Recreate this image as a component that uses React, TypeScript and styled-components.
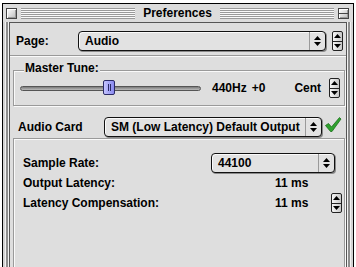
import React from 'react';
import styled, { createGlobalStyle } from 'styled-components';

const GlobalStyle = createGlobalStyle`
  html, body {
    margin: 0;
    padding: 0;
    background: #fff;
    overflow: hidden;
  }
  body {
    font-family: "Liberation Sans", Arial, sans-serif;
    font-size: 12px;
    font-weight: bold;
    color: #000;
  }
`;

const Window = styled.div`
  box-sizing: border-box;
  margin: 3px 0 0 2px;
  width: 352px;
  height: 264px;
  border: 1px solid #000;
  border-bottom: none;
  background: #d2d2d2;
  display: flex;
  flex-direction: column;
  padding: 0 6px;
`;

const TitleBar = styled.div`
  height: 18px;
  margin: 0 -6px;
  display: flex;
  align-items: center;
  gap: 4px;
  padding: 0 4px 0 3px;
  background: #dcdcdc;
`;

const CloseBox = styled.div`
  box-sizing: border-box;
  width: 11px;
  height: 11px;
  border: 1px solid #444;
  background: linear-gradient(135deg, #ffffff 0%, #bbbbbb 100%);
  box-shadow: inset 1px 1px 0 #fff, inset -1px -1px 0 #999;
`;

const ShadeBox = styled(CloseBox)`
  display: flex;
  align-items: center;
  &::after {
    content: '';
    display: block;
    width: 100%;
    height: 1px;
    background: #444;
  }
`;

const Stripes = styled.div`
  flex: 1;
  height: 11px;
  background: repeating-linear-gradient(to bottom, #9a9a9a 0 1px, #fafafa 1px 2px);
`;

const Title = styled.div`
  padding: 0 4px;
  line-height: 16px;
`;

const Content = styled.div`
  flex: 1;
  display: flex;
  flex-direction: column;
  border: 1px solid #555;
  border-bottom: none;
  background: #dedede;
  box-shadow: -1px 0 0 #f2f2f2, -3px 0 0 #8e8e8e, -4px 0 0 #f2f2f2,
    1px 0 0 #f2f2f2, 3px 0 0 #8e8e8e, 4px 0 0 #f2f2f2;
`;

const Row = styled.div<{ $top: number; $left: number; $height: number }>`
  display: flex;
  align-items: center;
  margin-top: ${({ $top }) => $top}px;
  padding-left: ${({ $left }) => $left}px;
  height: ${({ $height }) => $height}px;
`;

const Label = styled.div<{ $width: number }>`
  width: ${({ $width }) => $width}px;
  flex-shrink: 0;
  white-space: nowrap;
`;

const Divider = styled.div`
  margin-top: 4px;
  height: 1px;
  background: #999;
  border-bottom: 1px solid #fafafa;
`;

const GroupBox = styled.div<{ $top: number; $grow?: boolean }>`
  position: relative;
  margin: ${({ $top }) => $top}px 1px 0 3px;
  border: 1px solid #9a9a9a;
  box-shadow: inset 1px 1px 0 #fafafa, 1px 1px 0 #fafafa;
  ${({ $grow }) => ($grow ? 'flex: 1; border-bottom: none;' : '')}
`;

const Legend = styled.div`
  position: absolute;
  left: 10px;
  top: -10px;
  padding: 0 1px;
  background: #dedede;
  line-height: 14px;
`;

const PopupBox = styled.div<{ $width: number }>`
  box-sizing: border-box;
  width: ${({ $width }) => $width}px;
  height: 20px;
  border: 1px solid #111;
  border-radius: 4px;
  background: #e2e2e2;
  box-shadow: 1px 1px 0 #8a8a8a, inset 1px 1px 0 #fafafa;
  display: flex;
  align-items: center;
  flex-shrink: 0;
`;

const PopupText = styled.div`
  flex: 1;
  padding-left: 6px;
  white-space: nowrap;
  overflow: hidden;
`;

const PopupArrow = styled.div`
  width: 15px;
  height: 100%;
  border-left: 1px solid #9a9a9a;
  display: flex;
  align-items: center;
  justify-content: center;
`;

const StepperBox = styled.div<{ $left: number }>`
  box-sizing: border-box;
  margin-left: ${({ $left }) => $left}px;
  width: 11px;
  height: 20px;
  border: 1px solid #222;
  border-radius: 2px;
  background: linear-gradient(to right, #f6f6f6, #c8c8c8);
  display: flex;
  flex-direction: column;
  flex-shrink: 0;
`;

const StepperHalf = styled.div<{ $bottom?: boolean }>`
  flex: 1;
  display: flex;
  align-items: center;
  justify-content: center;
  ${({ $bottom }) => ($bottom ? 'border-top: 1px solid #222;' : '')}
`;

const SliderTrack = styled.div`
  position: relative;
  box-sizing: border-box;
  width: 181px;
  height: 5px;
  border: 1px solid #555;
  border-radius: 3px;
  background: linear-gradient(to bottom, #7a7a7a, #bbbbbb);
  flex-shrink: 0;
`;

const SliderThumb = styled.div`
  position: absolute;
  left: 82px;
  top: -7px;
  box-sizing: border-box;
  width: 12px;
  height: 15px;
  border: 1px solid #2a2a66;
  border-radius: 2px;
  background: linear-gradient(to right, #c4c4ff, #8888ee);
  display: flex;
  justify-content: center;
  align-items: center;
  gap: 1px;
`;

const Grip = styled.div`
  width: 1px;
  height: 7px;
  background: #2a2a66;
`;

const Value = styled.div<{ $left: number }>`
  margin-left: ${({ $left }) => $left}px;
  white-space: nowrap;
`;

const Arrows = () => (
  <svg width="7" height="10" viewBox="0 0 7 10">
    <path d="M3.5 0 L7 4 L0 4 Z M3.5 10 L7 6 L0 6 Z" fill="#000" />
  </svg>
);

const Stepper = ({ left }: { left: number }) => (
  <StepperBox $left={left}>
    <StepperHalf>
      <svg width="7" height="4" viewBox="0 0 7 4">
        <path d="M3.5 0 L7 4 L0 4 Z" fill="#000" />
      </svg>
    </StepperHalf>
    <StepperHalf $bottom>
      <svg width="7" height="4" viewBox="0 0 7 4">
        <path d="M0 0 L7 0 L3.5 4 Z" fill="#000" />
      </svg>
    </StepperHalf>
  </StepperBox>
);

const Popup = ({ width, text }: { width: number; text: string }) => (
  <PopupBox $width={width}>
    <PopupText>{text}</PopupText>
    <PopupArrow>
      <Arrows />
    </PopupArrow>
  </PopupBox>
);

const CheckMark = () => (
  <svg width="18" height="18" viewBox="0 0 18 18" style={{ marginLeft: 2, marginTop: -4 }}>
    <path
      d="M1.5 9.5 L4.5 7.5 L7.5 11 L15.5 1.5 L17 3 L8 15.5 L6.5 15.5 Z"
      fill="#2fa32f"
      stroke="#1b6e1b"
      strokeWidth="0.8"
      strokeLinejoin="round"
    />
  </svg>
);

const App = () => (
  <>
    <GlobalStyle />
    <Window>
      <TitleBar>
        <CloseBox />
        <Stripes />
        <Title>Preferences</Title>
        <Stripes />
        <ShadeBox />
      </TitleBar>
      <Content>
        <Row $top={8} $left={6} $height={20}>
          <Label $width={62}>Page:</Label>
          <Popup width={248} text="Audio" />
          <Stepper left={6} />
        </Row>
        <Divider />
        <GroupBox $top={13}>
          <Legend>Master Tune:</Legend>
          <Row $top={0} $left={6} $height={34}>
            <SliderTrack>
              <SliderThumb>
                <Grip />
                <Grip />
              </SliderThumb>
            </SliderTrack>
            <Value $left={11}>440Hz</Value>
            <Value $left={5}>+0</Value>
            <Value $left={29}>Cent</Value>
            <Stepper left={8} />
          </Row>
        </GroupBox>
        <Row $top={11} $left={8} $height={20}>
          <Label $width={86}>Audio Card</Label>
          <Popup width={218} text="SM (Low Latency) Default Output" />
          <CheckMark />
        </Row>
        <GroupBox $top={1} $grow>
          <Row $top={13} $left={9} $height={21}>
            <Label $width={188}>Sample Rate:</Label>
            <Popup width={124} text="44100" />
          </Row>
          <Row $top={0} $left={9} $height={20}>
            <Label $width={252}>Output Latency:</Label>
            <Value $left={0}>11 ms</Value>
          </Row>
          <Row $top={0} $left={9} $height={20}>
            <Label $width={252}>Latency Compensation:</Label>
            <Value $left={0}>11 ms</Value>
            <Stepper left={23} />
          </Row>
        </GroupBox>
      </Content>
    </Window>
  </>
);

export default App;
